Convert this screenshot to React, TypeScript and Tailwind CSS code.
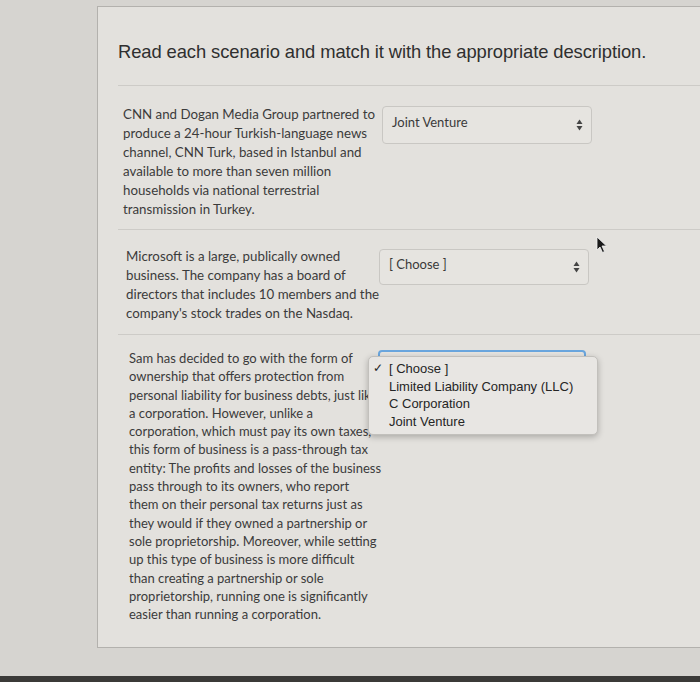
const lato = { fontFamily: 'Lato, "Open Sans", sans-serif' };

function Arrows() {
  return (
    <svg width="7" height="12" viewBox="0 0 7 12" className="shrink-0">
      <path d="M3.5 0.5 L6.5 5 L0.5 5 Z" fill="#444" />
      <path d="M0.5 7 L6.5 7 L3.5 11.5 Z" fill="#444" />
    </svg>
  );
}

function Select({ value, h = 'h-[38px]' }: { value: string; h?: string }) {
  return (
    <div
      className={`w-[210px] ${h} flex items-center justify-between rounded-[4px] border border-[#c9c7c3] bg-[#e6e4e0] pl-[9px] pr-[8px] text-[13px] text-[#3a3a3a]`}
      style={lato}
    >
      <span className="-mt-[4px]">{value}</span>
      <Arrows />
    </div>
  );
}

function Row({
  lines,
  children,
  className = '',
  text = 'text-[13.3px] leading-[19px]',
}: {
  lines: string[];
  children: React.ReactNode;
  className?: string;
  text?: string;
}) {
  return (
    <div className={`flex border-t border-[#cdcbc7] ${className}`}>
      <p
        className={`w-[259px] shrink-0 pl-[5px] ${text} text-[#3b3b3b] whitespace-nowrap`}
        style={lato}
      >
        {lines.map((l, i) => (
          <span key={i} className="block">
            {l}
          </span>
        ))}
      </p>
      <div className="relative">{children}</div>
    </div>
  );
}

export default function App() {
  return (
    <div className="relative w-[700px] h-[682px] overflow-hidden bg-[#d6d4d0]">
      <div className="ml-[97px] mt-[6px] h-[642px] border-l border-t border-b border-[#b3b1ad] bg-[#e3e1dd] pl-[20px]">
        <h1
          className="pt-[33px] pb-[21px] text-[18.4px] leading-[24px] text-[#2f2f2f] tracking-[-0.1px]"
          style={{ fontFamily: '"Liberation Sans", Arial, sans-serif' }}
        >
          Read each scenario and match it with the appropriate description.
        </h1>

        <Row
          className="pt-[19px] pb-[10px]"
          lines={[
            'CNN and Dogan Media Group partnered to',
            'produce a 24-hour Turkish-language news',
            'channel, CNN Turk, based in Istanbul and',
            'available to more than seven million',
            'households via national terrestrial',
            'transmission in Turkey.',
          ]}
        >
          <div className="mt-[1px] ml-[5px]">
            <Select value="Joint Venture" />
          </div>
        </Row>

        <Row
          className="pt-[17px] pb-[11px] pl-[3px]"
          lines={[
            'Microsoft is a large, publically owned',
            'business. The company has a board of',
            'directors that includes 10 members and the',
            "company's stock trades on the Nasdaq.",
          ]}
        >
          <div className="mt-[2px] -ml-[1px]">
            <Select value="[ Choose ]" h="h-[36px]" />
          </div>
        </Row>

        <Row
          className="pt-[14px] pb-[24px] pl-[6px]"
          text="text-[13px] leading-[18.3px]"
          lines={[
            'Sam has decided to go with the form of',
            'ownership that offers protection from',
            'personal liability for business debts, just like',
            'a corporation. However, unlike a',
            'corporation, which must pay its own taxes,',
            'this form of business is a pass-through tax',
            'entity: The profits and losses of the business',
            'pass through to its owners, who report',
            'them on their personal tax returns just as',
            'they would if they owned a partnership or',
            'sole proprietorship. Moreover, while setting',
            'up this type of business is more difficult',
            'than creating a partnership or sole',
            'proprietorship, running one is significantly',
            'easier than running a corporation.',
          ]}
        >
          <div className="relative mt-[1px] -ml-[5px]">
            <div className="w-[208px] h-[36px] rounded-[4px] border-2 border-[#6aa6de] bg-[#e6e4e0]" />
            <div
              className="absolute left-[-10px] top-[6px] w-[230px] rounded-[5px] border border-[#c2c0bc] bg-[#e8e6e3] py-[3px] text-[13px] leading-[17.7px] text-[#252525] shadow-[0_2px_6px_rgba(0,0,0,0.25)]"
              style={{ fontFamily: '"Liberation Sans", Arial, sans-serif' }}
            >
              <div className="flex">
                <span className="w-[20px] pl-[4px] text-[12px]">✓</span>
                <span>[ Choose ]</span>
              </div>
              <div className="pl-[20px]">Limited Liability Company (LLC)</div>
              <div className="pl-[20px]">C Corporation</div>
              <div className="pl-[20px]">Joint Venture</div>
            </div>
          </div>
        </Row>
      </div>

      <div className="absolute bottom-0 left-0 h-[6px] w-full bg-[#3b3a38]" />

      <svg className="absolute left-[596px] top-[236px]" width="12" height="18" viewBox="0 0 12 18">
        <path d="M1 1 L1 14 L4 11 L6.5 16.5 L8.5 15.5 L6 10 L10.5 10 Z" fill="#1a1a1a" stroke="#f4f4f4" strokeWidth="0.8" />
      </svg>
    </div>
  );
}
